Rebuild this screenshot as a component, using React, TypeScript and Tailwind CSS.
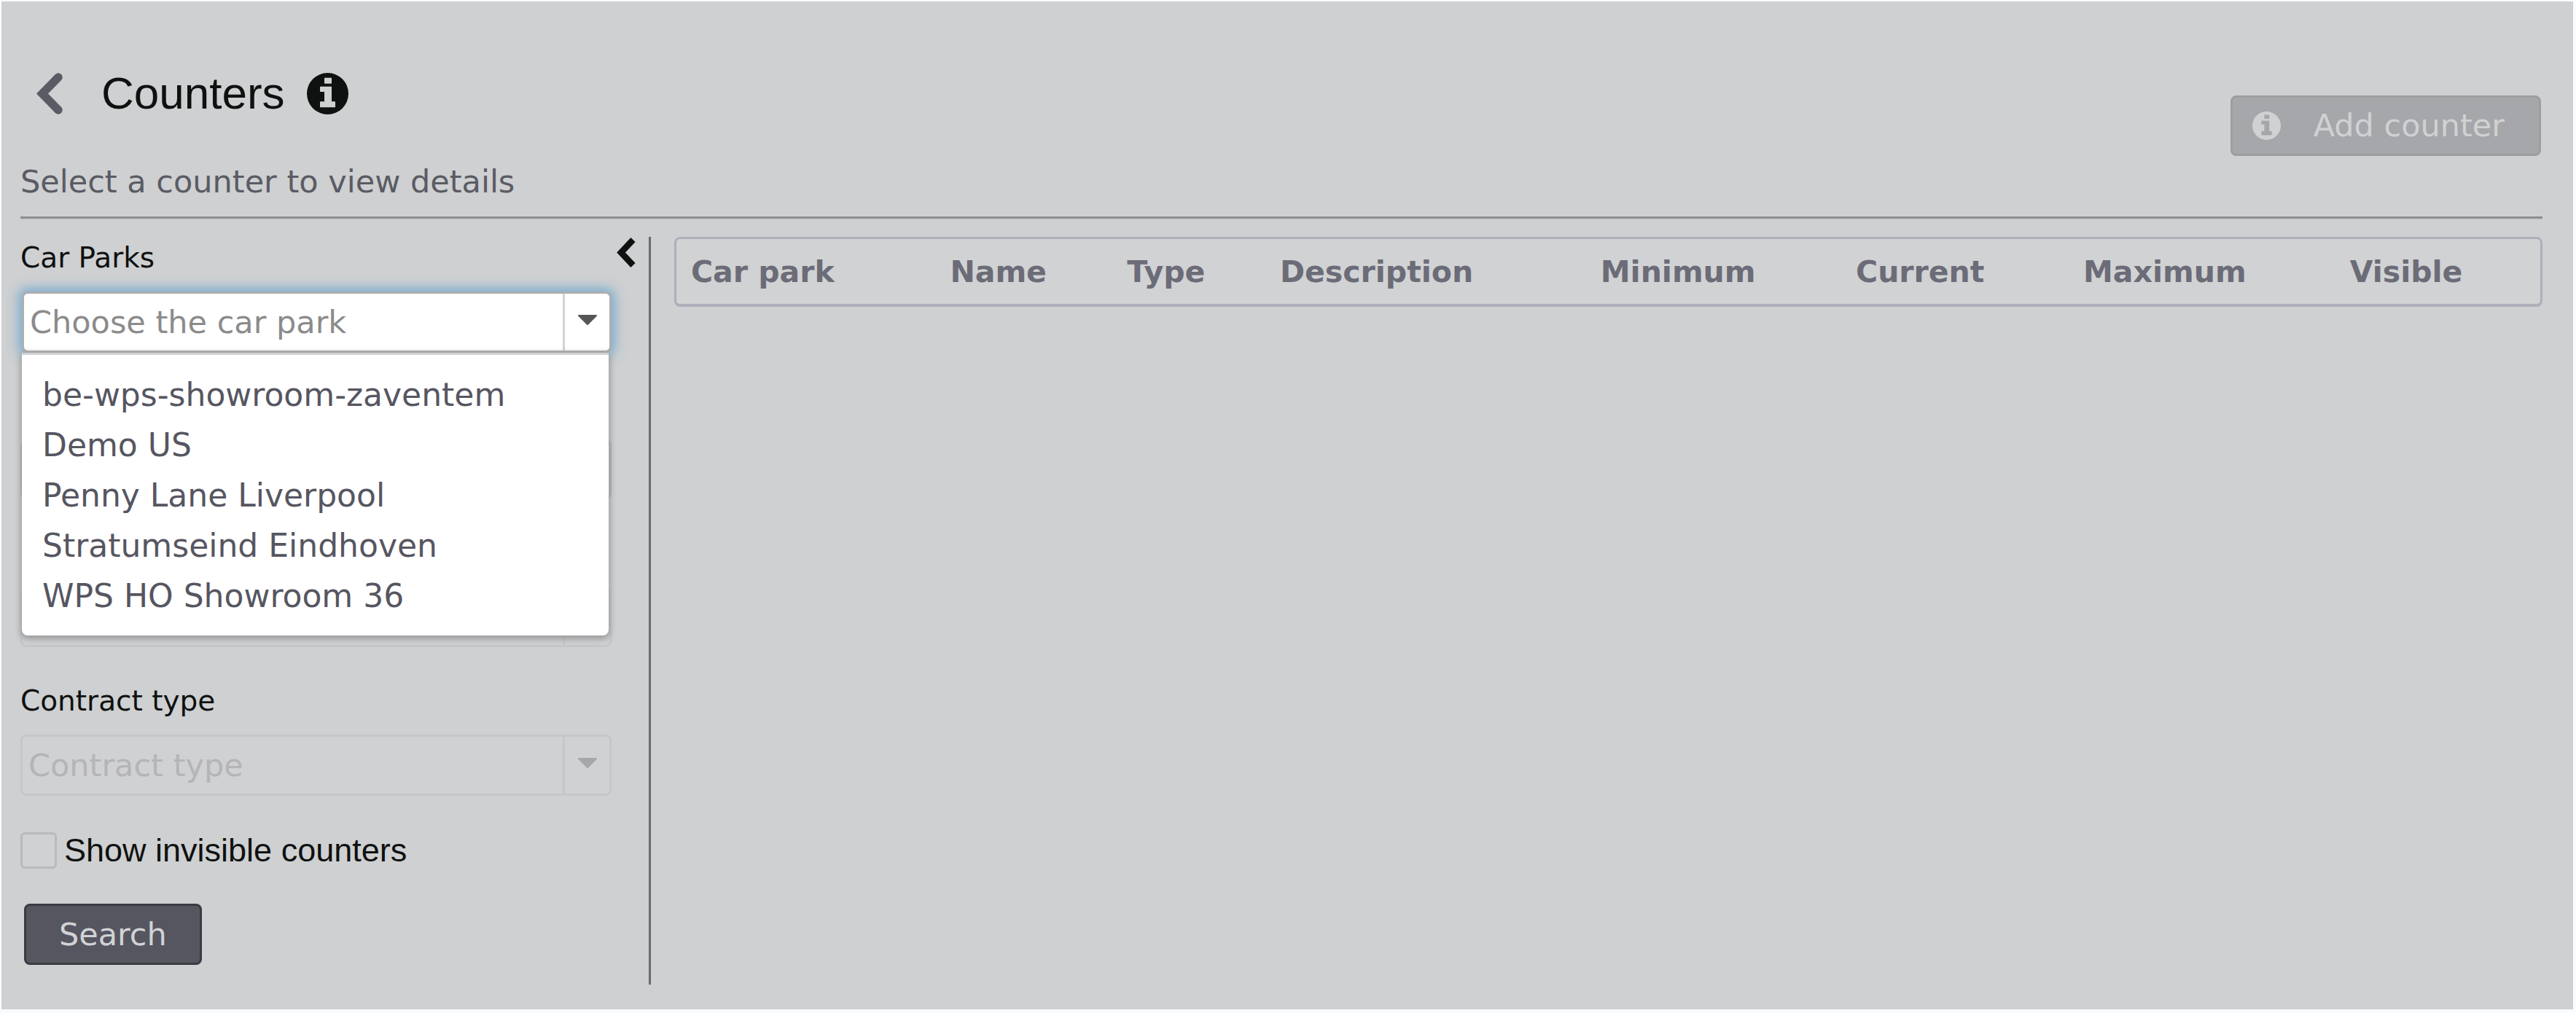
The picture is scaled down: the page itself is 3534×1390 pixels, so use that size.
import { useState } from 'react'

const CAR_PARKS = [
  'be-wps-showroom-zaventem',
  'Demo US',
  'Penny Lane Liverpool',
  'Stratumseind Eindhoven',
  'WPS HO Showroom 36',
]

const COLUMNS = [
  { label: 'Car park',    width: 'w-[13.9%]' },
  { label: 'Name',        width: 'w-[9.5%]' },
  { label: 'Type',        width: 'w-[8.2%]' },
  { label: 'Description', width: 'w-[17.2%]' },
  { label: 'Minimum',     width: 'w-[13.7%]' },
  { label: 'Current',     width: 'w-[12.2%]' },
  { label: 'Maximum',     width: 'w-[14.3%]' },
  { label: 'Visible',     width: 'w-[11%]' },
]

function Caret() {
  return (
    <svg width="26" height="14" viewBox="0 0 26 14" fill="currentColor" aria-hidden="true">
      <path d="M1 0h24a1 1 0 0 1 .7 1.7L14 13.4a1.4 1.4 0 0 1-2 0L.3 1.7A1 1 0 0 1 1 0z" />
    </svg>
  )
}

// Disc with a blocky "i" cut out of it
function InfoIcon({ className }: { className: string }) {
  return (
    <svg className={className} viewBox="0 0 171 171" fill="currentColor" aria-hidden="true">
      <path
        fillRule="evenodd"
        d="M85.500 0a85.500 85.500 0 1 1 0 171a85.500 85.500 0 1 1 0-171zM74 20a2 2 0 0 0-2 2v20a2 2 0 0 0 2 2h26a2 2 0 0 0 2-2V22a2 2 0 0 0-2-2zM56 56a2 2 0 0 0-2 2v18a2 2 0 0 0 2 2h16v40H56a2 2 0 0 0-2 2v20a2 2 0 0 0 2 2h59a2 2 0 0 0 2-2v-20a2 2 0 0 0-2-2h-13V58a2 2 0 0 0-2-2z"
      />
    </svg>
  )
}

function DisabledCombo({ id, placeholder, label }: { id: string; placeholder?: string; label?: string }) {
  return (
    <div className="flex h-[84px] rounded-lg border-[3px] border-[#c6c7c9] bg-[#d0d1d3]">
      <input
        id={id}
        disabled
        aria-label={label}
        placeholder={placeholder}
        className="min-w-0 flex-1 pl-2 text-[43px] placeholder:text-[#b4b5b7] placeholder:opacity-100"
      />
      <button
        type="button"
        disabled
        aria-label="Open list"
        className="flex w-16 items-center justify-center border-l-[3px] border-[#c6c7c9] pb-1.5 text-[#a6a7a8]"
      >
        <Caret />
      </button>
    </div>
  )
}

function CarParkCombo() {
  const [value, setValue] = useState('')
  const [open, setOpen] = useState(true)

  return (
    <div className="relative pl-0.5">
      <div className="flex h-[84px] rounded-lg border-[3px] border-[#adaeb0] bg-white shadow-[0_0_16px_4px_#74a9d0]">
        <input
          id="car-park"
          role="combobox"
          aria-expanded={open}
          aria-controls="car-park-list"
          placeholder="Choose the car park"
          value={value}
          onChange={(e) => setValue(e.target.value)}
          className="min-w-0 flex-1 pl-2 text-[43px] text-[#565661] outline-none placeholder:text-[#8b8b8b] placeholder:opacity-100"
        />
        <button
          type="button"
          aria-label="Toggle car parks"
          onClick={() => setOpen(!open)}
          className="flex w-16 items-center justify-center border-l-[3px] border-[#d3d3d3] pb-1.5 text-[#555655]"
        >
          <Caret />
        </button>
      </div>

      {open && (
        <ul
          id="car-park-list"
          role="listbox"
          aria-label="Car Parks"
          className="absolute top-full right-1 left-0.5 z-10 rounded-b-lg border-t-3 border-[#d2d2d2] bg-white py-5 text-[44px] leading-[69px] text-[#565661] shadow-[0_3px_8px_2px_#9a9b9c]"
        >
          {CAR_PARKS.map((name) => (
            <li
              key={name}
              role="option"
              aria-selected={value === name}
              className="cursor-pointer truncate px-7"
              onClick={() => {
                setValue(name)
                setOpen(false)
              }}
            >
              {name}
            </li>
          ))}
        </ul>
      )}
    </div>
  )
}

function Filters() {
  return (
    <form className="w-[811px] shrink-0 pt-[5px] pb-[27px]" onSubmit={(e) => e.preventDefault()}>
      <label htmlFor="car-park" className="mb-[22px] block text-[39px] leading-[48px] text-[#0f1110]">
        Car Parks
      </label>
      <CarParkCombo />

      <input
        aria-label="Name"
        className="mt-[119px] block h-[82px] w-full rounded-lg border-[3px] border-[#b0b1b3] bg-[#d0d1d3]"
      />

      <div className="mt-[119px]">
        <DisabledCombo id="counter-type" label="Type" />
      </div>

      <label htmlFor="contract-type" className="mt-[50px] mb-[22px] block text-[39px] leading-[48px] text-[#0f1110]">
        Contract type
      </label>
      <DisabledCombo id="contract-type" placeholder="Contract type" />

      <div className="mt-[50px] flex items-center gap-2.5">
        <input
          id="show-invisible"
          type="checkbox"
          className="size-[50px] shrink-0 appearance-none rounded-md border-[3px] border-[#b9babc] bg-[#d0d1d3] checked:bg-[#565661]"
        />
        <label
          htmlFor="show-invisible"
          className="font-['Liberation_Sans',Arial,sans-serif] text-[45px] leading-[50px] text-[#0f1110]"
        >
          Show invisible counters
        </label>
      </div>

      <button
        type="submit"
        className="mt-12 ml-[5px] h-[84px] rounded-lg border-[3px] border-[#3a3b42] bg-[#565661] px-[45px] text-[43px] text-[#d2d3d5]"
      >
        Search
      </button>
    </form>
  )
}

function CountersTable() {
  return (
    <div className="min-w-0 flex-1 self-start rounded-lg border-[3px] border-b-4 border-[#adafba] bg-[#d1d2d4]">
      <table className="w-full table-fixed text-left">
        <thead>
          <tr className="h-[89px]">
            {COLUMNS.map((col) => (
              <th
                key={col.label}
                scope="col"
                className={`${col.width} pl-5 text-[41px] leading-[48px] font-bold text-[#6b6c77]`}
              >
                {col.label}
              </th>
            ))}
          </tr>
        </thead>
      </table>
    </div>
  )
}

export default function App() {
  return (
    <div className="min-h-screen bg-[#fafbfd] pt-0.5 pr-1 pb-[5px] pl-0.5 font-['DejaVu_Sans',Verdana,sans-serif]">
      <div className="bg-[#ced0d1] px-[26px] pt-[94px] pr-[42px] pb-[34px]">
        <header className="flex items-start justify-between">
          <div>
            <div className="flex h-16 items-center pl-[22px]">
              <a href="#back" aria-label="Back" className="text-[#5b5b66]">
                <svg width="36" height="57" viewBox="0 0 36 57" fill="none" stroke="currentColor" aria-hidden="true">
                  <path d="M30 6L8 28.500L30 51" strokeWidth="11.500" strokeLinecap="round" />
                </svg>
              </a>
              <h1 className="ml-[53px] font-['Liberation_Sans',Arial,sans-serif] text-[62px] leading-[64px] text-[#0f1110]">
                Counters
              </h1>
              <button type="button" aria-label="About counters" className="ml-[30px] text-[#0f1110]">
                <InfoIcon className="size-[57px]" />
              </button>
            </div>
            <p className="mt-[63px] text-[43px] leading-[52px] text-[#5b5b64]">Select a counter to view details</p>
          </div>

          <button
            type="button"
            disabled
            className="mt-[35px] mr-0.5 flex h-[83px] items-center rounded-lg border-[3px] border-[#9d9ea0] bg-[#a5a7aa] pr-[47px] pl-[27px] text-[43px] text-[#d0d1d3]"
          >
            <InfoIcon className="mr-[45px] size-[39px]" />
            Add counter
          </button>
        </header>

        <hr className="mt-[22px] border-t-[3px] border-b-2 border-t-[#8d8e8f] border-b-[#c9cacd]" />

        <div className="mt-[23px] flex items-stretch">
          <Filters />
          <button type="button" aria-label="Collapse filters" className="ml-[7px] self-start pt-px text-[#0f1110]">
            <svg width="26" height="41" viewBox="0 0 26 41" fill="none" stroke="currentColor" aria-hidden="true">
              <path d="M22.500 3L6 20.500L22.500 38" strokeWidth="8.500" />
            </svg>
          </button>
          <div className="mr-8 ml-[18px] w-[3px] shrink-0 bg-[#656b74]" />
          <CountersTable />
        </div>
      </div>
    </div>
  )
}
